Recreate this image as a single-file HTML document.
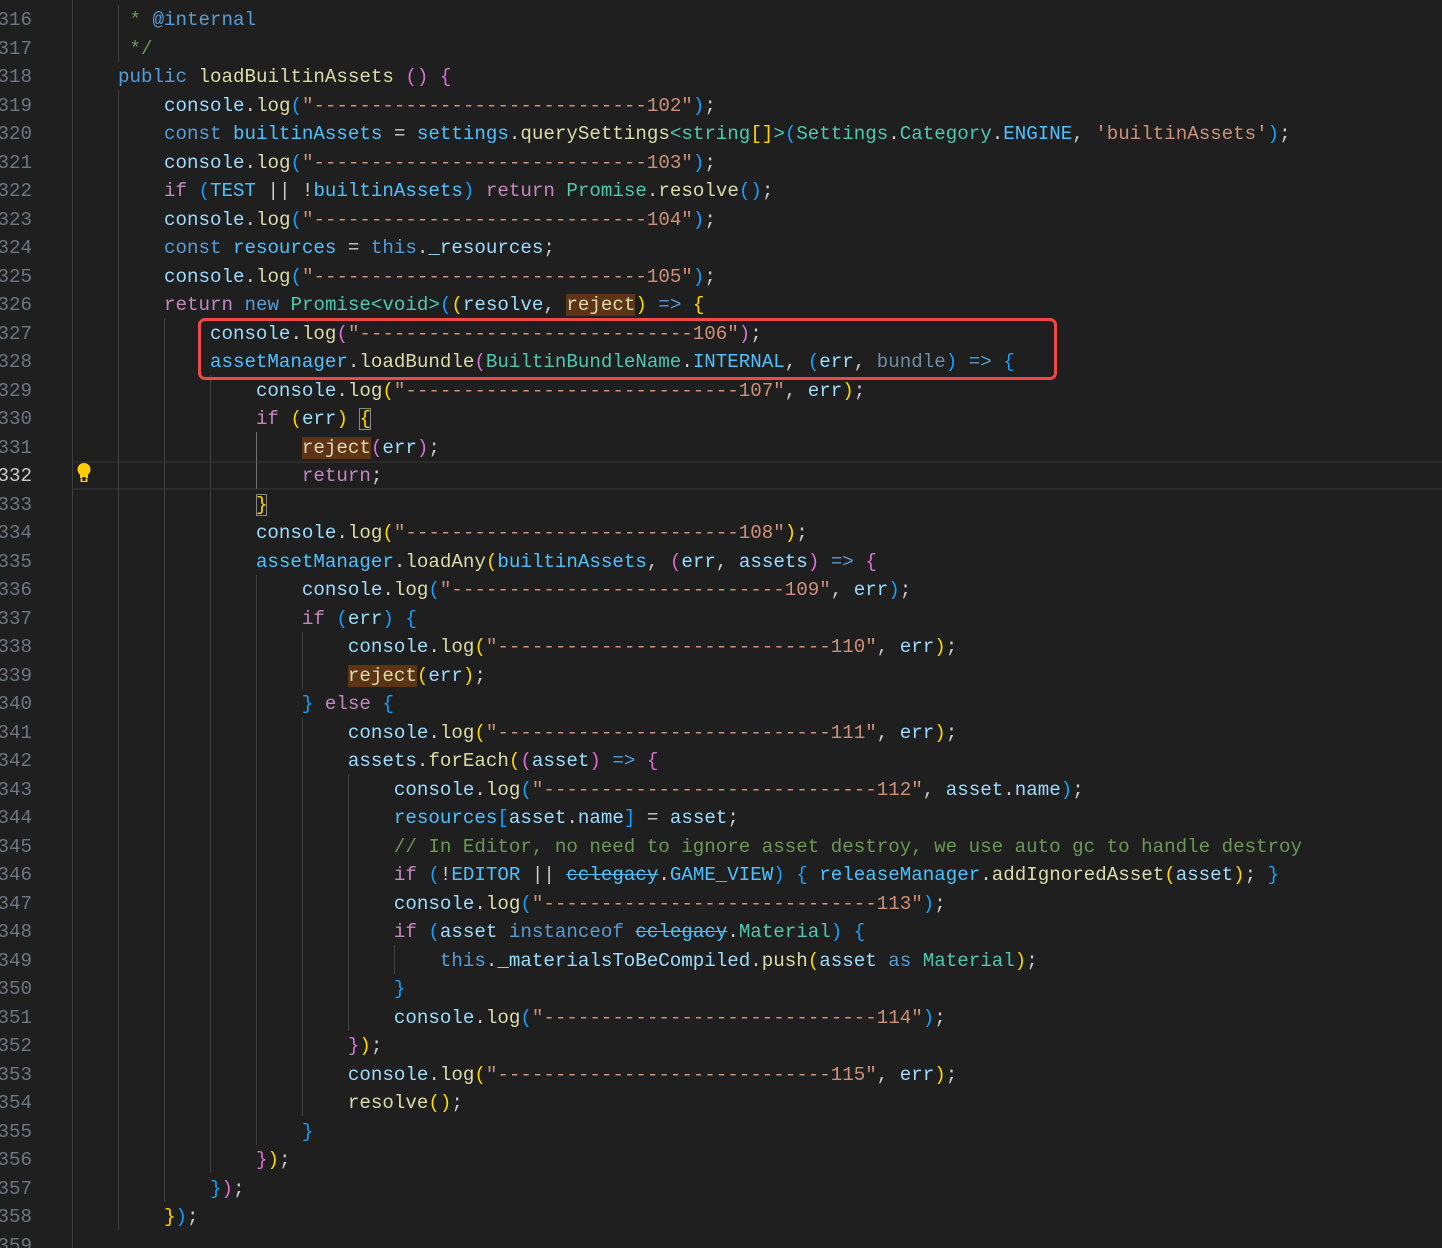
<!DOCTYPE html>
<html><head><meta charset="utf-8"><style>
html,body{margin:0;padding:0;background:#1f1f1f;width:1442px;height:1248px;overflow:hidden;position:relative}
.l{position:absolute;left:72px;height:28.5px;line-height:28.5px;white-space:pre;font-family:"Liberation Mono",monospace;font-size:19.17px;color:#cccccc;margin-top:1px}
.n{position:absolute;left:-10px;width:42px;text-align:right;height:28.5px;line-height:28.5px;font-family:"Liberation Mono",monospace;font-size:19.17px;color:#6e7681;margin-top:1px}
.g{position:absolute;width:1px;background:#404040}
b,s,u{font-weight:normal;text-decoration:none}
k{color:#569cd6}c{color:#c586c0}v{color:#9cdcfe}b{color:#4fc1ff}f{color:#dcdcaa}s{color:#ce9178}t{color:#4ec9b0}m{color:#6a9955}
y{color:#ffd700}o{color:#da70d6}u{color:#179fff}
r{color:#dcdcaa;background:#5e3417}
.d{color:#6f8ea3}
b.st{text-decoration:line-through}
.bx{outline:1px solid #8a8a8a;outline-offset:-1px}
</style></head><body>
<div style="position:absolute;left:72px;right:0;top:461px;height:28.5px;box-sizing:border-box;border-top:2px solid #2b2b2b;border-bottom:2px solid #2b2b2b"></div>
<div class="g" style="left:72px;top:0;height:1248px"></div>
<div class="g" style="left:118px;top:5px;height:57px"></div>
<div class="g" style="left:118px;top:90px;height:1140px"></div>
<div class="g" style="left:164px;top:318px;height:884px"></div>
<div class="g" style="left:210px;top:375px;height:798px"></div>
<div class="g" style="left:256px;top:432px;height:57px;background:#707070"></div>
<div class="g" style="left:256px;top:575px;height:570px"></div>
<div class="g" style="left:302px;top:632px;height:57px"></div>
<div class="g" style="left:302px;top:717px;height:399px"></div>
<div class="g" style="left:348px;top:774px;height:257px"></div>
<div class="g" style="left:394px;top:945px;height:29px"></div>
<svg style="position:absolute;left:76px;top:462px" width="16" height="22" viewBox="0 0 16 22"><path d="M8 1C4 1 1.5 4 1.5 7.5c0 2.5 1.5 4 2.5 5.5V16h8v-3c1-1.5 2.5-3 2.5-5.5C14.5 4 12 1 8 1z" fill="#ffcc00"/><rect x="4.5" y="16.5" width="7" height="3.5" fill="#ffcc00"/><rect x="6.5" y="15" width="3" height="4" fill="#1f1f1f"/></svg>
<div style="position:absolute;left:198px;top:318px;width:859px;height:62px;box-sizing:border-box;border:3px solid #f04848;border-radius:7px"></div>

<div class="n" style="top:5px">316</div><div class="l" style="top:5px">     <m>* </m><k>@internal</k></div>
<div class="n" style="top:33.5px">317</div><div class="l" style="top:33.5px">     <m>*/</m></div>
<div class="n" style="top:62px">318</div><div class="l" style="top:62px">    <k>public</k> <f>loadBuiltinAssets</f> <o>()</o> <o>{</o></div>
<div class="n" style="top:90.5px">319</div><div class="l" style="top:90.5px">        <v>console</v>.<f>log</f><u>(</u><s>"-----------------------------102"</s><u>)</u>;</div>
<div class="n" style="top:119px">320</div><div class="l" style="top:119px">        <k>const</k> <b>builtinAssets</b> = <b>settings</b>.<f>querySettings</f><t>&lt;string</t><y>[]</y><t>&gt;</t><u>(</u><t>Settings</t>.<t>Category</t>.<b>ENGINE</b>, <s>'builtinAssets'</s><u>)</u>;</div>
<div class="n" style="top:147.5px">321</div><div class="l" style="top:147.5px">        <v>console</v>.<f>log</f><u>(</u><s>"-----------------------------103"</s><u>)</u>;</div>
<div class="n" style="top:176px">322</div><div class="l" style="top:176px">        <c>if</c> <u>(</u><b>TEST</b> || !<b>builtinAssets</b><u>)</u> <c>return</c> <t>Promise</t>.<f>resolve</f><u>()</u>;</div>
<div class="n" style="top:204.5px">323</div><div class="l" style="top:204.5px">        <v>console</v>.<f>log</f><u>(</u><s>"-----------------------------104"</s><u>)</u>;</div>
<div class="n" style="top:233px">324</div><div class="l" style="top:233px">        <k>const</k> <b>resources</b> = <k>this</k>.<v>_resources</v>;</div>
<div class="n" style="top:261.5px">325</div><div class="l" style="top:261.5px">        <v>console</v>.<f>log</f><u>(</u><s>"-----------------------------105"</s><u>)</u>;</div>
<div class="n" style="top:290px">326</div><div class="l" style="top:290px">        <c>return</c> <k>new</k> <t>Promise&lt;void&gt;</t><u>(</u><y>(</y><v>resolve</v>, <r>reject</r><y>)</y> <k>=&gt;</k> <y>{</y></div>
<div class="n" style="top:318.5px">327</div><div class="l" style="top:318.5px">            <v>console</v>.<f>log</f><o>(</o><s>"-----------------------------106"</s><o>)</o>;</div>
<div class="n" style="top:347px">328</div><div class="l" style="top:347px">            <b>assetManager</b>.<f>loadBundle</f><o>(</o><t>BuiltinBundleName</t>.<b>INTERNAL</b>, <u>(</u><v>err</v>, <span class="d">bundle</span><u>)</u> <k>=&gt;</k> <u>{</u></div>
<div class="n" style="top:375.5px">329</div><div class="l" style="top:375.5px">                <v>console</v>.<f>log</f><y>(</y><s>"-----------------------------107"</s>, <v>err</v><y>)</y>;</div>
<div class="n" style="top:404px">330</div><div class="l" style="top:404px">                <c>if</c> <y>(</y><v>err</v><y>)</y> <y class="bx">{</y></div>
<div class="n" style="top:432.5px">331</div><div class="l" style="top:432.5px">                    <r>reject</r><o>(</o><v>err</v><o>)</o>;</div>
<div class="n" style="top:461px;color:#cccccc">332</div><div class="l" style="top:461px">                    <c>return</c>;</div>
<div class="n" style="top:489.5px">333</div><div class="l" style="top:489.5px">                <y class="bx">}</y></div>
<div class="n" style="top:518px">334</div><div class="l" style="top:518px">                <v>console</v>.<f>log</f><y>(</y><s>"-----------------------------108"</s><y>)</y>;</div>
<div class="n" style="top:546.5px">335</div><div class="l" style="top:546.5px">                <b>assetManager</b>.<f>loadAny</f><y>(</y><b>builtinAssets</b>, <o>(</o><v>err</v>, <v>assets</v><o>)</o> <k>=&gt;</k> <o>{</o></div>
<div class="n" style="top:575px">336</div><div class="l" style="top:575px">                    <v>console</v>.<f>log</f><u>(</u><s>"-----------------------------109"</s>, <v>err</v><u>)</u>;</div>
<div class="n" style="top:603.5px">337</div><div class="l" style="top:603.5px">                    <c>if</c> <u>(</u><v>err</v><u>)</u> <u>{</u></div>
<div class="n" style="top:632px">338</div><div class="l" style="top:632px">                        <v>console</v>.<f>log</f><y>(</y><s>"-----------------------------110"</s>, <v>err</v><y>)</y>;</div>
<div class="n" style="top:660.5px">339</div><div class="l" style="top:660.5px">                        <r>reject</r><y>(</y><v>err</v><y>)</y>;</div>
<div class="n" style="top:689px">340</div><div class="l" style="top:689px">                    <u>}</u> <c>else</c> <u>{</u></div>
<div class="n" style="top:717.5px">341</div><div class="l" style="top:717.5px">                        <v>console</v>.<f>log</f><y>(</y><s>"-----------------------------111"</s>, <v>err</v><y>)</y>;</div>
<div class="n" style="top:746px">342</div><div class="l" style="top:746px">                        <v>assets</v>.<f>forEach</f><y>(</y><o>(</o><v>asset</v><o>)</o> <k>=&gt;</k> <o>{</o></div>
<div class="n" style="top:774.5px">343</div><div class="l" style="top:774.5px">                            <v>console</v>.<f>log</f><u>(</u><s>"-----------------------------112"</s>, <v>asset</v>.<v>name</v><u>)</u>;</div>
<div class="n" style="top:803px">344</div><div class="l" style="top:803px">                            <b>resources</b><u>[</u><v>asset</v>.<v>name</v><u>]</u> = <v>asset</v>;</div>
<div class="n" style="top:831.5px">345</div><div class="l" style="top:831.5px">                            <m>// In Editor, no need to ignore asset destroy, we use auto gc to handle destroy</m></div>
<div class="n" style="top:860px">346</div><div class="l" style="top:860px">                            <c>if</c> <u>(</u>!<b>EDITOR</b> || <b class="st">cclegacy</b>.<b>GAME_VIEW</b><u>)</u> <u>{</u> <b>releaseManager</b>.<f>addIgnoredAsset</f><y>(</y><v>asset</v><y>)</y>; <u>}</u></div>
<div class="n" style="top:888.5px">347</div><div class="l" style="top:888.5px">                            <v>console</v>.<f>log</f><u>(</u><s>"-----------------------------113"</s><u>)</u>;</div>
<div class="n" style="top:917px">348</div><div class="l" style="top:917px">                            <c>if</c> <u>(</u><v>asset</v> <k>instanceof</k> <b class="st">cclegacy</b>.<t>Material</t><u>)</u> <u>{</u></div>
<div class="n" style="top:945.5px">349</div><div class="l" style="top:945.5px">                                <k>this</k>.<v>_materialsToBeCompiled</v>.<f>push</f><y>(</y><v>asset</v> <k>as</k> <t>Material</t><y>)</y>;</div>
<div class="n" style="top:974px">350</div><div class="l" style="top:974px">                            <u>}</u></div>
<div class="n" style="top:1002.5px">351</div><div class="l" style="top:1002.5px">                            <v>console</v>.<f>log</f><u>(</u><s>"-----------------------------114"</s><u>)</u>;</div>
<div class="n" style="top:1031px">352</div><div class="l" style="top:1031px">                        <o>}</o><y>)</y>;</div>
<div class="n" style="top:1059.5px">353</div><div class="l" style="top:1059.5px">                        <v>console</v>.<f>log</f><y>(</y><s>"-----------------------------115"</s>, <v>err</v><y>)</y>;</div>
<div class="n" style="top:1088px">354</div><div class="l" style="top:1088px">                        <f>resolve</f><y>()</y>;</div>
<div class="n" style="top:1116.5px">355</div><div class="l" style="top:1116.5px">                    <u>}</u></div>
<div class="n" style="top:1145px">356</div><div class="l" style="top:1145px">                <o>}</o><y>)</y>;</div>
<div class="n" style="top:1173.5px">357</div><div class="l" style="top:1173.5px">            <u>}</u><o>)</o>;</div>
<div class="n" style="top:1202px">358</div><div class="l" style="top:1202px">        <y>}</y><u>)</u>;</div>
<div class="n" style="top:1230.5px">359</div>
</body></html>
